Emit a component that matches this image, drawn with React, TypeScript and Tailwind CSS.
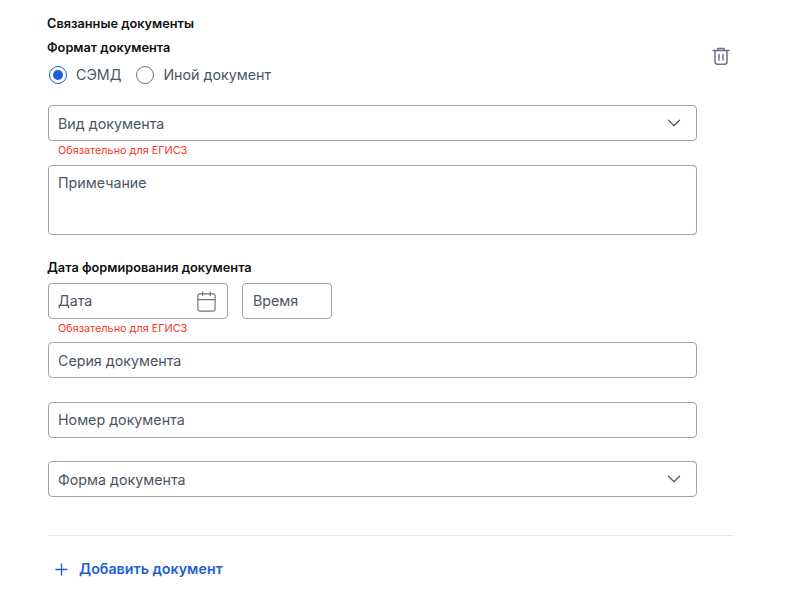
import { Calendar, ChevronDown, Plus } from "lucide-react";

function Field({ label, chevron }: { label: string; chevron?: boolean }) {
    return (
        <div className="ml-[1px] h-[36px] w-[649px] flex items-center justify-between rounded-[4px] border border-[#a3a3a3] pl-[9px] pr-[11px] text-[14.25px] text-[#4b5563]">
            <span className="pt-[1px]">{label}</span>
            {chevron && <ChevronDown className="w-[22px] h-[22px] text-[#4b5563]" strokeWidth={1.3} />}
        </div>
    );
}

function Required() {
    return <div className="pl-[11px] h-[24px] pt-[2px] text-[10.85px] leading-[14px] text-[#f5362d]">Обязательно для ЕГИСЗ</div>;
}

function TrashIcon() {
    return (
        <svg width="20" height="20" viewBox="0 0 20 20" fill="none" stroke="#6b7280" strokeWidth="1.5" strokeLinecap="round" strokeLinejoin="round">
            <path d="M2 4.5h16" />
            <path d="M7 4V2.6h6V4" />
            <path d="M4 4.5v11.2c0 1.6.9 2.5 2.5 2.5h7c1.6 0 2.5-.9 2.5-2.5V4.5" />
            <path d="M8 8.5v5.5M12 8.5v5.5" />
        </svg>
    );
}

export default function App() {
    return (
        <div className="w-[800px] h-[590px] overflow-hidden bg-white pl-[47px] pt-[15px] font-['Inter',sans-serif]">
            <div className="text-[12.75px] leading-[17px] font-semibold text-[#111111]">Связанные документы</div>

            <div className="w-[686px] flex justify-between">
                <div>
                    <div className="mt-[7px] text-[12.75px] leading-[17px] font-semibold text-[#111111]">Формат документа</div>

                    {/* Radio */}
                    <div className="mt-[9px] flex items-center h-[20px] text-[14.25px] text-[#4b5563]">
                        <span className="ml-[2px] w-[18px] h-[18px] rounded-full border-[1.5px] border-[#1d5fd6] flex items-center justify-center">
                            <span className="w-[10px] h-[10px] rounded-full bg-[#1d5fd6]" />
                        </span>
                        <span className="ml-[9px]">СЭМД</span>
                        <span className="ml-[15px] w-[18px] h-[18px] rounded-full border-[1.5px] border-[#757575]" />
                        <span className="ml-[9px]">Иной документ</span>
                    </div>
                </div>
                <div className="mt-[14px] mr-[2px]">
                    <TrashIcon />
                </div>
            </div>

            <div className="mt-[20px]">
                <Field label="Вид документа" chevron />
            </div>
            <Required />

            <div className="ml-[1px] w-[649px] h-[70px] rounded-[4px] border border-[#a3a3a3] pl-[9px] pr-[10px] pt-[7px] text-[14.25px] leading-[20px] text-[#4b5563]">
                Примечание
            </div>

            <div className="mt-[24px] text-[12.75px] leading-[17px] font-semibold text-[#111111]">Дата формирования документа</div>

            <div className="mt-[7px] ml-[1px] flex gap-[14px]">
                <div className="w-[180px] h-[36px] flex items-center justify-between rounded-[4px] border border-[#a3a3a3] pl-[9px] pr-[9px] text-[14.25px] text-[#4b5563]">
                    <span>Дата</span>
                    <Calendar className="w-[23px] h-[23px] text-[#6b7280]" strokeWidth={1.2} />
                </div>
                <div className="w-[90px] h-[36px] flex items-center rounded-[4px] border border-[#a3a3a3] pl-[10px] text-[14.25px] text-[#4b5563]">
                    Время
                </div>
            </div>
            <Required />

            <div className="flex flex-col gap-[23.5px] -mt-[1px]">
                <Field label="Серия документа" />
                <Field label="Номер документа" />
                <Field label="Форма документа" chevron />
            </div>

            <div className="mt-[38px] ml-[1px] w-[685px] border-t border-[#e5e5e5]" />

            <div className="mt-[23px] ml-[5px] flex items-center gap-[8px] text-[14.25px] leading-[20px] font-semibold text-[#1d5fd6]">
                <Plus className="w-[19px] h-[19px]" strokeWidth={1.7} />
                <span>Добавить документ</span>
            </div>
        </div>
    );
}
